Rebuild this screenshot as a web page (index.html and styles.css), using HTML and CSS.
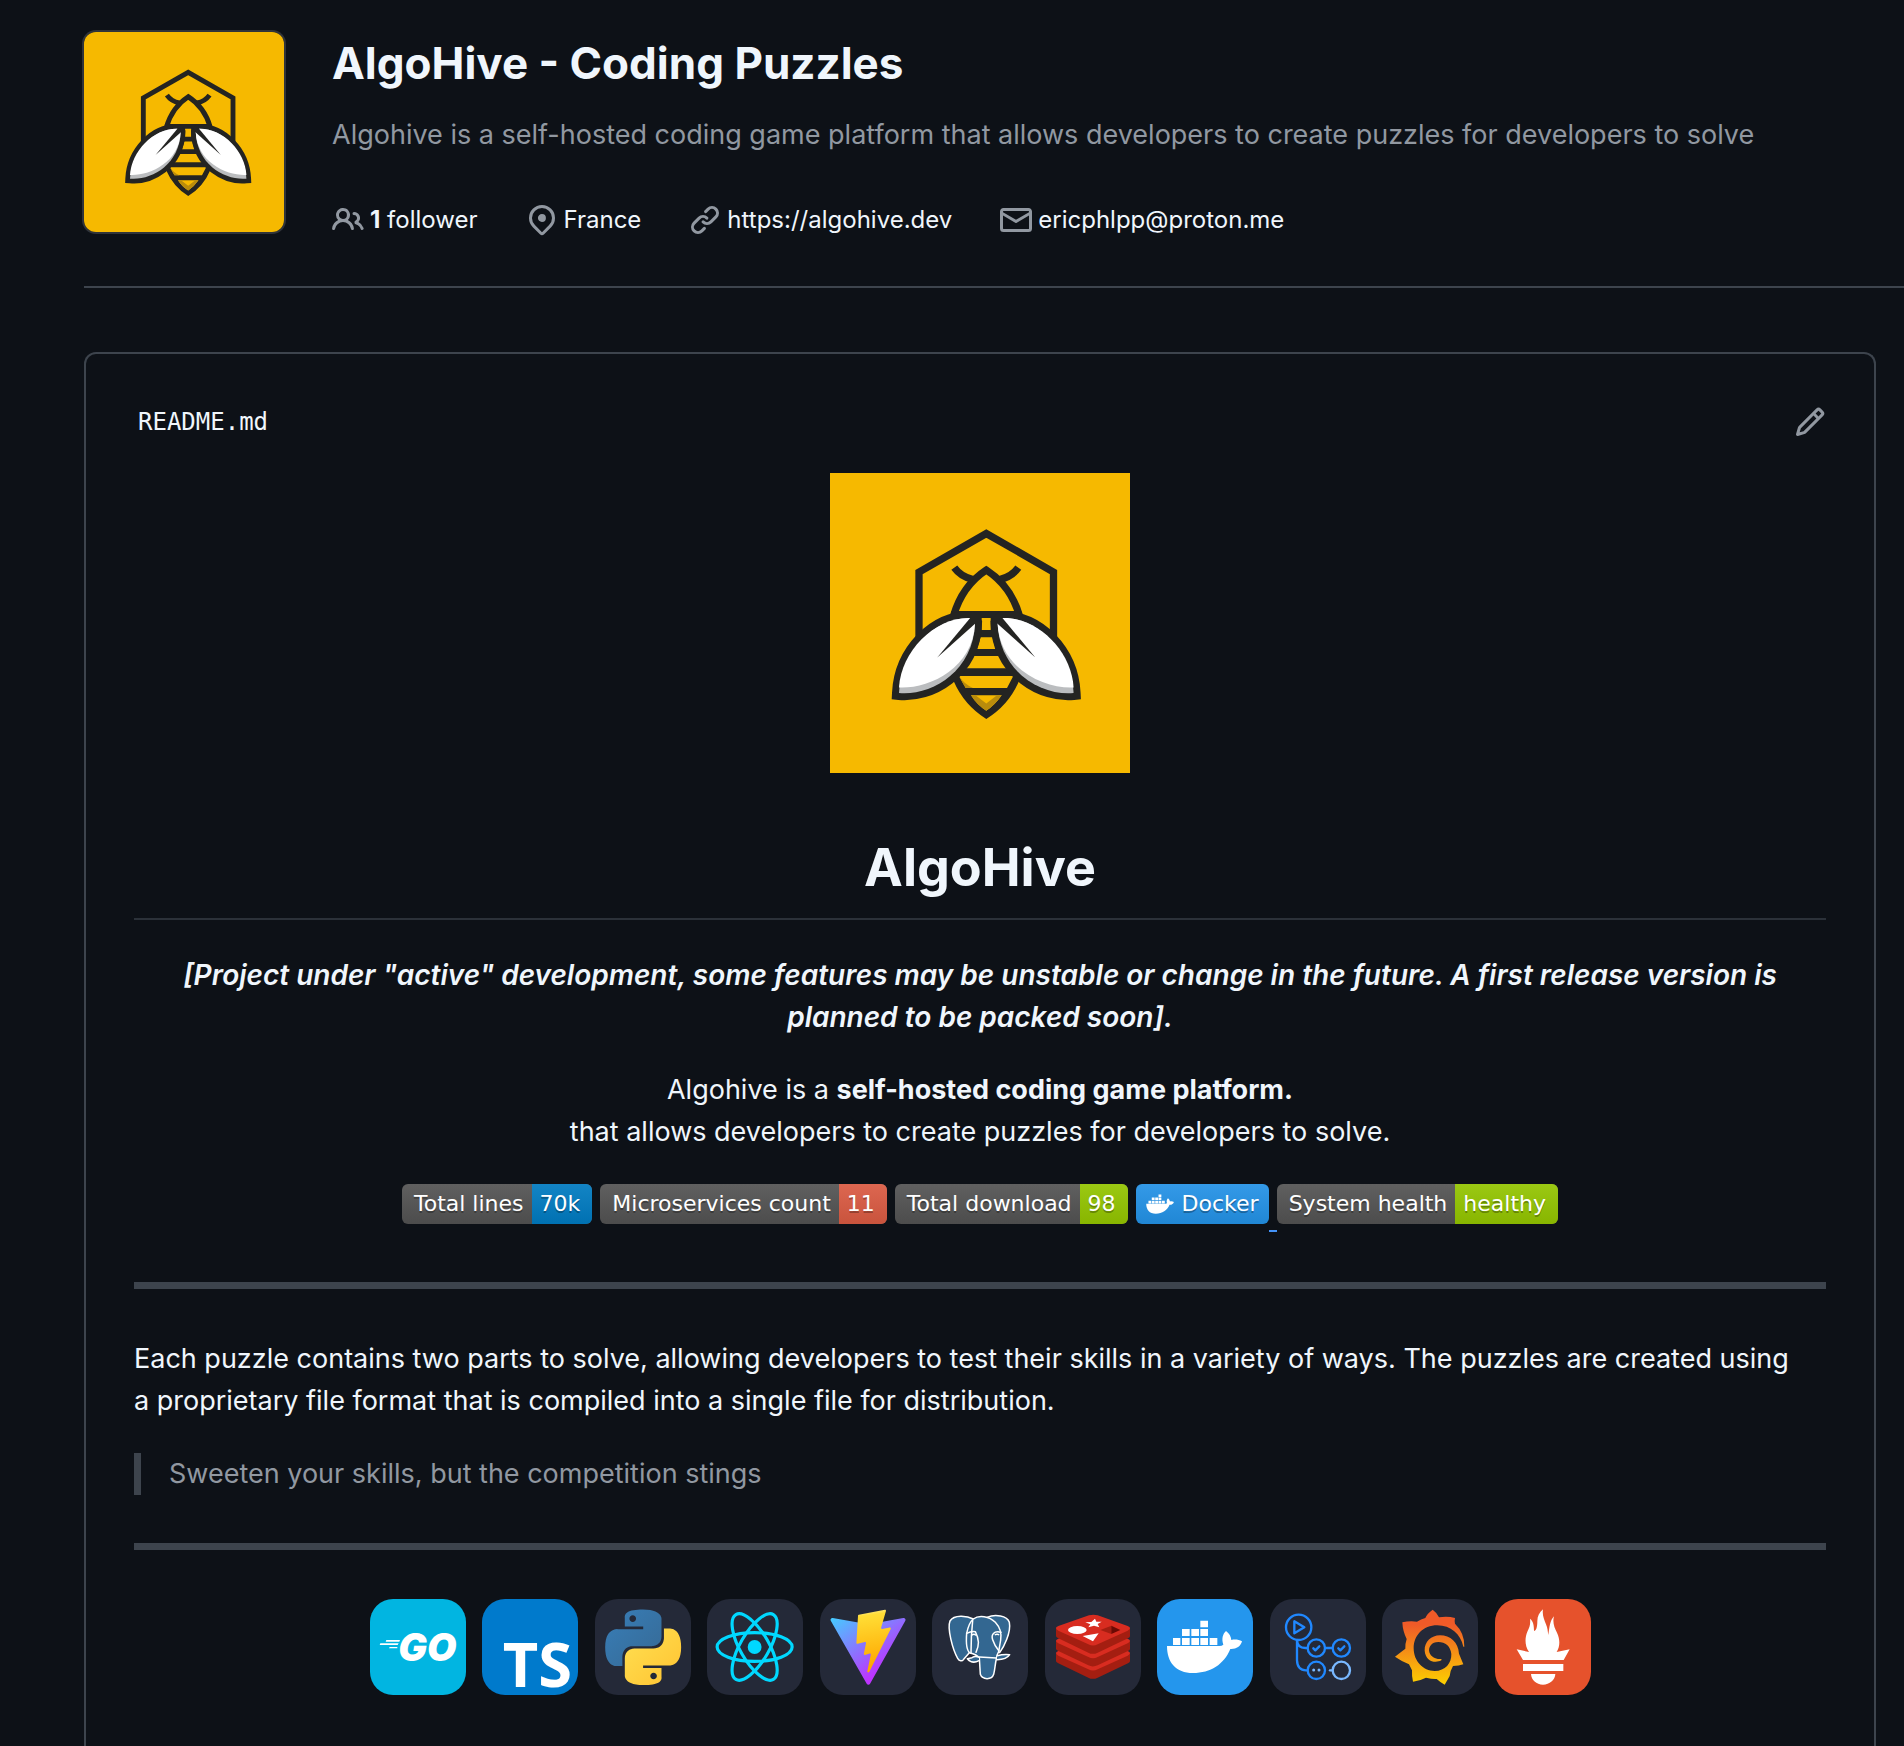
FILE: index.html
```html
<!DOCTYPE html>
<html lang="en">
<head>
    <meta charset="UTF-8">
    <meta name="viewport" content="width=device-width, initial-scale=1.0">
    <title>AlgoHive - Coding Puzzles</title>
    <link rel="stylesheet" href="styles.css">
</head>
<body>
    <!-- Shared bee logo -->
    <svg class="defs" width="0" height="0" aria-hidden="true">
        <symbol id="bee" viewBox="0 0 300 300">
            <rect width="300" height="300" fill="#f6b900"/>
            <g fill="none" stroke="#242422" stroke-width="7.3">
                <path d="M89 165V99L156.300 60.500L223.500 99V165"/>
                <path d="M123.500 143Q132 113 156.300 97Q181 113 189.500 143"/>
                <path d="M124.300 94.700Q131 104 143 106.500M188.300 94.700Q181.600 104 169.600 106.500"/>
            </g>
            <path fill="#242422" d="M121 138H191.600L176 165Q182 190 189 208Q179 232 156.300 246Q134 232 123.600 208Q131 190 137 165Z"/>
            <path fill="#f6b900" d="M151.700 145H160.700V157H151.700ZM150.700 164.300H162.300L165.700 176H147ZM143 183H169.300L176.700 195.300H135.300ZM129 203H183.300L177 215H135.700ZM141 222.300H171.700Q165 232 156.300 237.700Q147 232 141 222.300Z"/>
            <path fill="#b98c0c" d="M129 203Q133 211 135.700 215H143Q134 211 129 203ZM141 222.300Q147 232 156.300 237.700Q165 232 171.700 222.300H167L156.300 230.500L145.500 222.300Z"/>
            <g id="wing">
                <path fill="#bbbdbf" stroke="#242422" stroke-width="14" paint-order="stroke" d="M140 145C105 144 71 178 69 220C100 223 143 200 145 150.500Z"/>
                <path fill="#fff" d="M140 145C105 144 71 178 69 214.500C98 216 143 196 145 150.500Z"/>
                <path fill="#242422" d="M141 144L107.300 184.500L147 149Z"/>
            </g>
            <use href="#wing" transform="translate(312.600 0) scale(-1 1)"/>
        </symbol>
    </svg>

    <header class="org-header">
        <svg class="avatar" role="img" aria-label="AlgoHive"><use href="#bee"/></svg>
        <div class="org-info">
            <h1 class="org-name">AlgoHive - Coding Puzzles</h1>
            <p class="org-desc">Algohive is a self-hosted coding game platform that allows developers to create puzzles for developers to solve</p>
            <ul class="org-meta">
                <li>
                    <svg class="octicon" viewBox="0 0 16 16"><path d="M2 5.500a3.500 3.500 0 1 1 5.898 2.549 5.508 5.508 0 0 1 3.034 4.084.75.75 0 1 1-1.482.235 4 4 0 0 0-7.900 0 .75.75 0 0 1-1.482-.236A5.507 5.507 0 0 1 3.102 8.050 3.493 3.493 0 0 1 2 5.500ZM11 4a3.001 3.001 0 0 1 2.220 5.018 5.010 5.010 0 0 1 2.560 3.012.749.749 0 0 1-.885.954.752.752 0 0 1-.549-.514 3.507 3.507 0 0 0-2.522-2.372.75.75 0 0 1-.574-.73v-.352a.75.75 0 0 1 .416-.672A1.500 1.500 0 0 0 11 5.500.75.75 0 0 1 11 4Zm-5.500-.5a2 2 0 1 0-.001 3.999A2 2 0 0 0 5.500 3.500Z"/></svg>
                    <a href="#followers"><b>1</b> follower</a>
                </li>
                <li>
                    <svg class="octicon" viewBox="0 0 16 16"><path d="m12.596 11.596-3.535 3.536a1.500 1.500 0 0 1-2.122 0l-3.535-3.536a6.500 6.500 0 1 1 9.192-9.193 6.500 6.500 0 0 1 0 9.193Zm-1.060-8.132v-.001a5 5 0 1 0-7.072 7.072L8 14.070l3.536-3.534a5 5 0 0 0 0-7.072ZM8 9a2 2 0 1 1-.001-3.999A2 2 0 0 1 8 9Z"/></svg>
                    <span>France</span>
                </li>
                <li>
                    <svg class="octicon" viewBox="0 0 16 16"><path d="m7.775 3.275 1.250-1.250a3.500 3.500 0 1 1 4.950 4.950l-2.500 2.500a3.500 3.500 0 0 1-4.950 0 .751.751 0 0 1 .018-1.042.751.751 0 0 1 1.042-.018 1.998 1.998 0 0 0 2.830 0l2.500-2.500a2.002 2.002 0 0 0-2.830-2.830l-1.250 1.250a.751.751 0 0 1-1.042-.018.751.751 0 0 1-.018-1.042Zm-4.690 9.640a1.998 1.998 0 0 0 2.830 0l1.250-1.250a.751.751 0 0 1 1.042.018.751.751 0 0 1 .018 1.042l-1.250 1.250a3.500 3.500 0 1 1-4.950-4.950l2.500-2.500a3.500 3.500 0 0 1 4.950 0 .751.751 0 0 1-.018 1.042.751.751 0 0 1-1.042.018 1.998 1.998 0 0 0-2.830 0l-2.500 2.500a1.998 1.998 0 0 0 0 2.830Z"/></svg>
                    <a href="https://algohive.dev">https://algohive.dev</a>
                </li>
                <li>
                    <svg class="octicon" viewBox="0 0 16 16"><path d="M1.750 2h12.500c.966 0 1.750.784 1.750 1.750v8.500A1.750 1.750 0 0 1 14.250 14H1.750A1.750 1.750 0 0 1 0 12.250v-8.500C0 2.784.784 2 1.750 2ZM1.500 12.251c0 .138.112.25.25.25h12.500a.25.25 0 0 0 .25-.25V5.809L8.380 9.397a.75.75 0 0 1-.76 0L1.500 5.809v6.442Zm13-8.181v-.32a.25.25 0 0 0-.25-.25H1.750a.25.25 0 0 0-.25.25v.32L8 7.880Z"/></svg>
                    <a href="mailto:ericphlpp@proton.me">ericphlpp@proton.me</a>
                </li>
            </ul>
        </div>
    </header>

    <main class="readme">
        <div class="readme-bar">
            <a class="readme-file" href="#readme">README.md</a>
            <button class="edit" type="button" aria-label="Edit README">
                <svg class="octicon" viewBox="0 0 16 16"><path d="M11.013 1.427a1.750 1.750 0 0 1 2.474 0l1.086 1.086a1.750 1.750 0 0 1 0 2.474l-8.610 8.610c-.21.21-.47.364-.756.445l-3.251.93a.75.75 0 0 1-.927-.928l.929-3.250c.081-.286.235-.547.445-.758l8.610-8.610Zm.176 4.823L9.750 4.811l-6.286 6.287a.253.253 0 0 0-.064.108l-.558 1.953 1.953-.558a.249.249 0 0 0 .108-.064Zm1.238-3.763a.25.25 0 0 0-.354 0L10.811 3.750l1.439 1.440 1.263-1.263a.25.25 0 0 0 0-.354Z"/></svg>
            </button>
        </div>

        <svg class="logo" role="img" aria-label="AlgoHive logo"><use href="#bee"/></svg>

        <h2 class="title">AlgoHive</h2>

        <p class="center notice">[Project under "active" development, some features may be unstable or change in the future. A first release version is planned to be packed soon].</p>
        <p class="center">Algohive is a <b>self-hosted coding game platform.</b><br>that allows developers to create puzzles for developers to solve.</p>

        <div class="badges">
            <span class="badge"><span class="key">Total lines</span><span class="value blue">70k</span></span>
            <span class="badge"><span class="key">Microservices count</span><span class="value red">11</span></span>
            <span class="badge"><span class="key">Total download</span><span class="value green">98</span></span>
            <a class="badge docker" href="#docker">
                <svg viewBox="28 60 228 166"><use href="#whale"/></svg>
                <span class="value">Docker</span>
            </a>
            <span class="badge"><span class="key">System health</span><span class="value green">healthy</span></span>
        </div>

        <hr>

        <p class="intro">Each puzzle contains two parts to solve, allowing developers to test their skills in a variety of ways. The puzzles are created using a proprietary file format that is compiled into a single file for distribution.</p>
        <blockquote>Sweeten your skills, but the competition stings</blockquote>

        <hr>

        <div class="stack">
            <!-- Go -->
            <svg class="tech go" viewBox="0 0 288 288">
                <path d="M49 123H90L88 128H47ZM31 133H86L83 138H29ZM59 144H82V148H57Z" fill="#fff"/>
                <text x="85" y="185">GO</text>
            </svg>
            <!-- TypeScript -->
            <svg class="tech ts" viewBox="0 0 288 288">
                <text x="62" y="263">TS</text>
            </svg>
            <!-- Python -->
            <svg class="tech" viewBox="0 0 256 256">
                <linearGradient id="pyBlue" x1="0" y1="0" x2="1" y2="1"><stop offset="0" stop-color="#387eb8"/><stop offset="1" stop-color="#366994"/></linearGradient>
                <linearGradient id="pyYellow" x1="0" y1="0" x2="1" y2="1"><stop offset="0" stop-color="#ffe052"/><stop offset="1" stop-color="#ffc331"/></linearGradient>
                <g transform="translate(27.600 28) scale(8.400)">
                    <path fill="url(#pyBlue)" d="M14.250.18l.9.2.73.26.59.3.45.32.34.34.25.34.16.33.1.3.04.26.02.2-.01.13V8.500l-.05.63-.13.55-.21.46-.26.38-.3.31-.33.25-.35.19-.35.14-.33.1-.3.07-.26.04-.21.02H8.770l-.69.05-.59.14-.5.22-.41.27-.33.32-.27.35-.2.36-.15.37-.1.35-.07.32-.04.27-.02.21v3.060H3.170l-.21-.03-.28-.07-.32-.12-.35-.18-.36-.26-.36-.36-.35-.46-.32-.59-.28-.73-.21-.88-.14-1.050-.05-1.230.06-1.220.16-1.040.24-.87.32-.71.36-.57.4-.44.42-.33.42-.24.4-.16.36-.1.32-.05.24-.01h.16l.06.01h8.160v-.83H6.180l-.01-2.750-.02-.37.05-.34.11-.31.17-.28.25-.26.31-.23.38-.2.44-.18.51-.15.58-.12.64-.1.71-.06.77-.04.84-.02 1.270.05zm-6.300 1.980l-.23.33-.08.41.08.41.23.34.33.22.41.09.41-.09.33-.22.23-.34.08-.41-.08-.41-.23-.33-.33-.22-.41-.09-.41.09z"/>
                    <path fill="url(#pyYellow)" d="M21.040 6.110l.28.06.32.12.35.18.36.27.36.35.35.47.32.59.28.73.21.88.14 1.040.05 1.230-.06 1.230-.16 1.040-.24.86-.32.71-.36.57-.4.45-.42.33-.42.24-.4.16-.36.09-.32.05-.24.02-.16-.01h-8.220v.82h5.840l.01 2.760.02.36-.05.34-.11.31-.17.29-.25.25-.31.24-.38.2-.44.17-.51.15-.58.13-.64.09-.71.07-.77.04-.84.01-1.270-.04-1.070-.14-.9-.2-.73-.25-.59-.3-.45-.33-.34-.34-.25-.34-.16-.33-.1-.3-.04-.25-.02-.2.01-.13v-5.340l.05-.64.13-.54.21-.46.26-.38.3-.32.33-.24.35-.2.35-.14.33-.1.3-.06.26-.04.21-.02.13-.01h5.840l.69-.05.59-.14.5-.21.41-.28.33-.32.27-.35.2-.36.15-.36.1-.35.07-.32.04-.28.02-.21V6.070h2.090l.14.01zm-6.470 14.250l-.23.33-.08.41.08.41.23.33.33.23.41.08.41-.08.33-.23.23-.33.08-.41-.08-.41-.23-.33-.33-.23-.41-.08-.41.08z"/>
                </g>
            </svg>
            <!-- React -->
            <svg class="tech" viewBox="0 0 256 256">
                <g fill="none" stroke="#00d8ff" stroke-width="8.500">
                    <ellipse cx="127" cy="128" rx="100" ry="38.500"/>
                    <ellipse cx="127" cy="128" rx="100" ry="38.500" transform="rotate(60 127 128)"/>
                    <ellipse cx="127" cy="128" rx="100" ry="38.500" transform="rotate(120 127 128)"/>
                </g>
                <circle cx="127" cy="128" r="18.500" fill="#00d8ff"/>
            </svg>
            <!-- Vite -->
            <svg class="tech" viewBox="0 0 256 256">
                <linearGradient id="viteA" x1="6" y1="33" x2="235" y2="344" gradientUnits="userSpaceOnUse"><stop stop-color="#41d1ff"/><stop offset="1" stop-color="#bd34fe"/></linearGradient>
                <linearGradient id="viteB" x1="194.651" y1="8.818" x2="236.076" y2="292.989" gradientUnits="userSpaceOnUse"><stop stop-color="#ffea83"/><stop offset=".083" stop-color="#ffdd35"/><stop offset="1" stop-color="#ffa800"/></linearGradient>
                <g transform="translate(23.300 27.700) scale(.511)">
                    <path fill="url(#viteA)" d="M399.641 59.525L215.643 388.545C211.844 395.338 202.084 395.378 198.228 388.618L10.582 59.556C6.381 52.190 12.680 43.267 21.028 44.759L205.223 77.682C206.398 77.892 207.601 77.890 208.776 77.676L389.119 44.806C397.439 43.289 403.768 52.143 399.641 59.525Z"/>
                    <path fill="url(#viteB)" d="M292.965 1.574L156.801 28.255C154.563 28.694 152.906 30.590 152.771 32.866L144.395 174.330C144.198 177.662 147.258 180.248 150.510 179.498L188.420 170.749C191.967 169.931 195.172 173.055 194.443 176.622L183.180 231.775C182.422 235.487 185.907 238.661 189.532 237.560L212.947 230.446C216.577 229.344 220.065 232.527 219.297 236.242L201.398 322.875C200.278 328.294 207.486 331.249 210.492 326.603L212.500 323.500L323.454 102.072C325.312 98.365 322.108 94.137 318.036 94.923L279.014 102.454C275.347 103.161 272.227 99.746 273.262 96.158L298.731 7.867C299.767 4.273 296.636 .855 292.965 1.574Z"/>
                </g>
            </svg>
            <!-- PostgreSQL -->
            <svg class="tech" viewBox="0 0 288 288">
                <g fill="#336791" stroke="#fff" stroke-width="4.500" stroke-linejoin="round" stroke-linecap="round">
                    <path d="M165 55C190 45 225 50 232 70C238 100 215 145 203 161L180 150Z"/>
                    <path d="M124 60C105 50 66 46 54 66C45 88 62 152 77 178C82 187 90 188 95 181L112 161Z"/>
                    <path d="M124 60C140 47 172 51 190 70C203 84 209 105 206 123L200 158Q194 168 193 180C189 196 189 212 185 226C179 244 151 243 145 226L142 177Q132 165 114 162C104 155 102 128 104 103C108 84 113 69 124 60Z"/>
                    <path d="M122 64Q117 110 117 162M142 174L193 177" fill="none"/>
                    <path d="M104 103Q118 96 130 98C142 122 142 138 132 160M207 100C185 94 177 108 182 122C187 138 193 146 201 156" fill="none"/>
                    <path d="M120 108Q126 104 131 108M190 107Q195 104 200 107" fill="none"/>
                    <path d="M196 170Q214 165 233 167Q224 182 195 182M141 175Q130 170 120 176L106 179Q120 196 141 185"/>
                </g>
            </svg>
            <!-- Redis -->
            <svg class="tech" viewBox="0 0 288 288">
                <g id="slab" transform="translate(0 75)">
                    <path fill="#a41e11" d="M33 87V112Q34 115 40 118L130 161Q143 168 158 161L249 118Q255 115 255 112V87Z"/>
                    <path fill="#d82c20" d="M33 87Q33 84 40 81L132 49Q145 45 158 49L248 81Q255 84 255 87T248 95L158 136Q144 143 130 136L40 95Q33 91 33 87Z"/>
                </g>
                <use href="#slab" transform="translate(0 -37)"/>
                <use href="#slab" transform="translate(0 -75)"/>
                <path fill="#fff" d="M150 59L154 68L170 68L158 75L163 85L147 80L130 85L136 76L121 70L139 69ZM113 111L161 103L144 127Z"/>
                <ellipse cx="97" cy="93" rx="28" ry="12" fill="#fff"/>
                <path fill="#a41e11" d="M166 93L199 80V105Z"/>
                <path fill="#6b0a04" d="M199 80L226 93L199 105Z"/>
            </svg>
            <!-- Docker -->
            <svg class="tech docker-bg" viewBox="0 0 288 288">
                <g id="whale" fill="#fff">
                    <path d="M48 117H70V138H48ZM75 117H98V138H75ZM103 117H126V138H103ZM130 117H153V138H130ZM158 117H181V138H158ZM75 90H98V111H75ZM103 90H126V111H103ZM130 90H153V111H130ZM130 65H153V85H130Z"/>
                    <path d="M30 141H188Q194 141 199 137C193 120 197 105 207 96C217 103 222 113 223 123C234 120 246 122 255 127C251 143 237 151 220 150C201 196 161 222 108 222C56 222 30 190 30 141Z"/>
                </g>
            </svg>
            <!-- GitHub Actions -->
            <svg class="tech" viewBox="0 0 288 288">
                <g fill="none" stroke="#2088ff" stroke-width="7" stroke-linejoin="round" stroke-linecap="round">
                    <circle cx="86" cy="85" r="38"/>
                    <path d="M73 67V103L103 85Z"/>
                    <path d="M81 123Q82 147 106 147H112M81 123V184Q82 214 108 214H112M167 147H186"/>
                    <circle cx="139" cy="147" r="26"/>
                    <circle cx="214" cy="147" r="26"/>
                    <circle cx="139" cy="214" r="26"/>
                    <path d="M130 148L136 154L148 142M205 148L211 154L223 142"/>
                </g>
                <circle cx="131" cy="213" r="4.500" fill="#79b8ff"/>
                <circle cx="147" cy="213" r="4.500" fill="#79b8ff"/>
                <g fill="none" stroke="#79b8ff" stroke-width="7" stroke-linecap="round">
                    <circle cx="214" cy="214" r="26"/>
                    <path d="M180 214H186"/>
                </g>
            </svg>
            <!-- Grafana -->
            <svg class="tech" viewBox="0 0 288 288">
                <linearGradient id="graf" x1="0" y1="1" x2="0" y2="0"><stop offset="0" stop-color="#fcd000"/><stop offset=".8" stop-color="#f05a28"/></linearGradient>
                <path fill="url(#graf)" d="M152 32Q166 42 171 55Q196 50 219 57Q217 66 219 74Q248 102 247 143H244C236 105 206 79 166 79C122 79 95 110 95 148C95 186 123 216 158 216C190 216 209 192 208 165C206 142 190 129 169 129C149 129 138 144 142 160C147 175 163 182 177 180Q180 180 178 184C160 194 131 188 128 155C127 128 148 109 174 109C205 109 229 130 231 164L244 196Q231 201 213 201Q205 214 203 231Q196 244 188 257Q175 250 164 240Q152 241 132 236Q113 246 93 248Q89 232 90 214Q86 206 81 196Q61 188 39 173Q54 161 70 149Q69 135 74 120Q62 96 61 70Q83 65 105 68Q117 61 130 57Q136 43 152 32Z"/>
            </svg>
            <!-- Prometheus -->
            <svg class="tech prom" viewBox="0 0 288 288">
                <path fill="#fff" d="M102 159C88 139 90 115 97 98C104 84 107 75 105 59C115 66 117 80 117 96C123 96 127 86 127 66C127 51 133 41 144 31C141 49 148 62 153 76C158 88 158 96 160 108C163 86 165 64 177 52C172 70 178 86 186 101C196 123 195 143 185 159L224 151L206 183H84L65 151ZM84 195H205V216H84ZM108 225H181C180 243 164 257 144 257S109 243 108 225Z"/>
            </svg>
        </div>
    </main>
</body>
</html>
```

FILE: styles.css
```css
* {
    box-sizing: border-box;
}
body {
    margin: 0;
    padding: 32px 0 0 84px;
    background-color: #0d1117;
    color: #f0f6fc;
    font-family: Inter, "Liberation Sans", sans-serif;
    font-size: 27px;
    line-height: 42px;
    overflow-x: hidden;
}
a {
    color: inherit;
    text-decoration: none;
}
b {
    font-weight: 700;
}
.defs {
    display: block;
}
.octicon {
    width: 32px;
    height: 32px;
    fill: #9198a1;
    flex: none;
}

/* Organisation header */
.org-header {
    display: flex;
    gap: 48px;
    padding-bottom: 48px;
    border-bottom: 2px solid #3d444d;
}
.avatar {
    width: 200px;
    height: 200px;
    border-radius: 12px;
    box-shadow: 0 0 0 2px #30343a;
    flex: none;
}
.org-name {
    margin: 0;
    font-size: 44px;
    font-weight: 700;
    line-height: 62px;
}
.org-desc {
    margin: 20px 0 46px;
    color: #9198a1;
}
.org-meta {
    display: flex;
    gap: 48px;
    margin: 0;
    padding: 0;
    list-style: none;
    font-size: 24px;
    line-height: 36px;
}
.org-meta li {
    display: flex;
    align-items: center;
    gap: 6px;
}

/* README card */
.readme {
    margin: 64px 28px 0 0;
    padding: 48px 48px 60px;
    border: 2px solid #3d444d;
    border-bottom: 0;
    border-radius: 12px 12px 0 0;
}
.readme-bar {
    display: flex;
    justify-content: space-between;
    align-items: center;
    height: 40px;
    margin-bottom: 31px;
    padding-left: 4px;
}
.readme-file {
    font-family: "DejaVu Sans Mono", monospace;
    font-size: 24px;
}
.edit {
    display: flex;
    padding: 0;
    border: 0;
    background: none;
    cursor: pointer;
}
.logo {
    display: block;
    width: 300px;
    height: 300px;
    margin: 0 auto;
}
.title {
    margin: 60px 0 34px;
    padding-bottom: 15px;
    border-bottom: 2px solid #2b3139;
    font-size: 52px;
    font-weight: 700;
    line-height: 70px;
    text-align: center;
}
.readme p {
    margin: 0 0 31px;
}
.readme .center {
    text-align: center;
}
.readme .intro {
    padding-right: 24px;
}
.notice {
    padding: 0 40px;
    font-size: 28px;
    font-style: italic;
    font-weight: 600;
}
.readme hr {
    height: 7px;
    margin: 48px 0 49px;
    border: 0;
    background-color: #3d444d;
}
blockquote {
    margin: 0;
    padding-left: 28px;
    border-left: 7px solid #3d444d;
    color: #9198a1;
}

/* Badges */
.badges {
    display: flex;
    flex-wrap: wrap;
    justify-content: center;
    gap: 8px;
    margin-bottom: 58px;
    font-family: Verdana, "DejaVu Sans", sans-serif;
    font-size: 22px;
    line-height: 40px;
    color: #fff;
    text-shadow: 0 2px 0 rgba(1, 1, 1, 0.3);
}
.badge {
    display: flex;
    height: 40px;
    border-radius: 6px;
    overflow: hidden;
    background-color: #555;
    background-image: linear-gradient(rgba(187, 187, 187, 0.1), rgba(0, 0, 0, 0.1));
}
.key {
    padding: 0 8px 0 12px;
}
.value {
    padding: 0 12px 0 8px;
    background-image: linear-gradient(rgba(187, 187, 187, 0.1), rgba(0, 0, 0, 0.1));
}
.blue {
    background-color: #007ec6;
}
.red {
    background-color: #e05d44;
}
.green {
    background-color: #97ca00;
}
.docker {
    position: relative;
    align-items: center;
    padding-left: 10px;
    overflow: visible;
    background-color: #2496ed;
}
.docker .value {
    padding-right: 10px;
    background: none;
}
.docker svg {
    width: 28px;
    height: 24px;
}
/* underline of the trailing space in the link */
.docker::after {
    content: "";
    position: absolute;
    top: 46px;
    left: 100%;
    width: 8px;
    height: 2px;
    background-color: #4493f8;
}

/* Tech stack */
.stack {
    display: flex;
    flex-wrap: wrap;
    justify-content: space-between;
    max-width: 1221px;
    margin: 0 auto;
}
.tech {
    width: 96px;
    height: 96px;
    border-radius: 23px;
    background-color: #242938;
    overflow: visible;
}
.tech text {
    fill: #fff;
}
.go {
    background-color: #01b5e1;
}
.go text {
    font: italic 900 114px Inter, sans-serif;
}
.ts {
    background-color: #007acc;
}
.ts text {
    font: 700 184px "Open Sans", sans-serif;
}
.docker-bg {
    background-color: #2496ed;
}
.prom {
    background-color: #e6522c;
}
```
